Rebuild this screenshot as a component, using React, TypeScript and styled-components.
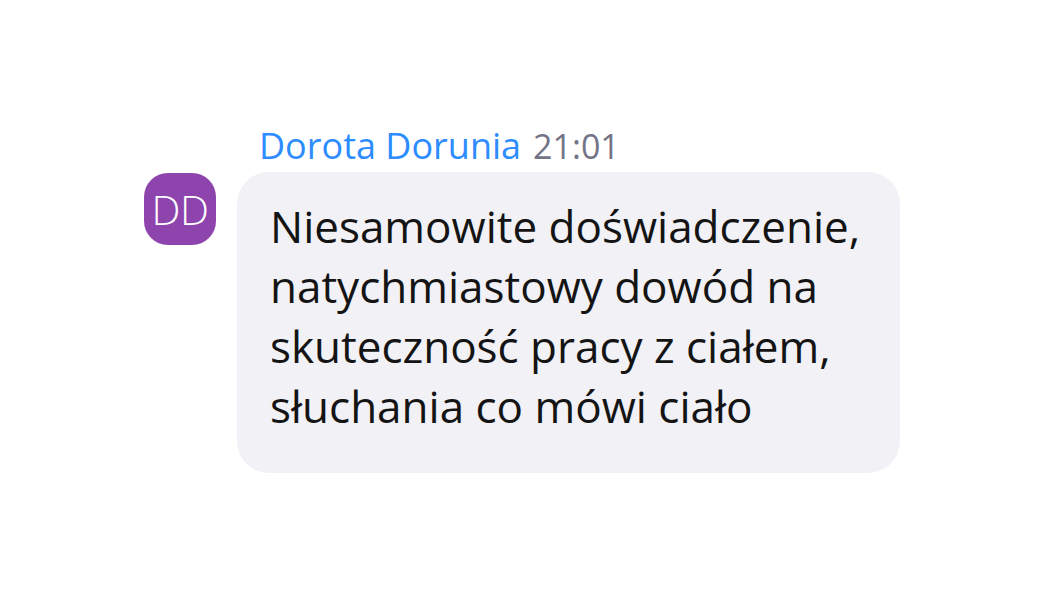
import styled, {createGlobalStyle} from "styled-components";
import React from "react";

const GlobalStyle = createGlobalStyle`
    body {
        margin: 0;
        background: #ffffff;
        font-family: "Open Sans", "Noto Sans", sans-serif;
    }
`;

const Page = styled.div`
    width: 1050px;
    height: 600px;
    padding: 121px 0 0 144px;
    box-sizing: border-box;
`;

const MessageRow = styled.div`
    display: flex;
    flex-direction: row;
    gap: 21px;
`;

const Avatar = styled.div`
    width: 72px;
    height: 72px;
    border-radius: 24px;
    background: #8e44ad;
    color: #ffffff;
    display: flex;
    align-items: center;
    justify-content: center;
    font-size: 41px;
    font-weight: 300;
    letter-spacing: -0.5px;
    margin-top: 52px;
`;

const MessageColumn = styled.div`
    display: flex;
    flex-direction: column;
`;

const Header = styled.div`
    display: flex;
    flex-direction: row;
    align-items: baseline;
    gap: 12px;
    padding-left: 22px;
    height: 51px;
`;

const SenderName = styled.span`
    color: #2d8cff;
    font-size: 36px;
`;

const Time = styled.span`
    color: #747487;
    font-size: 34px;
`;

const Bubble = styled.div`
    width: 663px;
    height: 301px;
    box-sizing: border-box;
    background: #f1f1f6;
    border-radius: 32px;
    padding: 24px 0 0 33px;
`;

const Line = styled.div`
    font-size: 44px;
    line-height: 60px;
    color: #141414;
    white-space: nowrap;
`;

const lines = [
    "Niesamowite doświadczenie,",
    "natychmiastowy dowód na",
    "skuteczność pracy z ciałem,",
    "słuchania co mówi ciało",
];

export default function App() {
    return (
        <>
            <GlobalStyle/>
            <Page>
                <MessageRow>
                    <Avatar>DD</Avatar>
                    <MessageColumn>
                        <Header>
                            <SenderName>Dorota Dorunia</SenderName>
                            <Time>21:01</Time>
                        </Header>
                        <Bubble>
                            {lines.map((line) => <Line key={line}>{line}</Line>)}
                        </Bubble>
                    </MessageColumn>
                </MessageRow>
            </Page>
        </>
    );
}
